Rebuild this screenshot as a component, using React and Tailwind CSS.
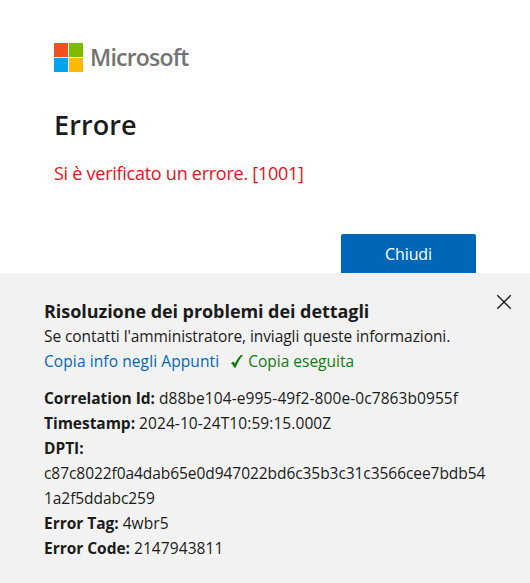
import React from 'react';
import clsx from 'clsx';

const DETAILS = [
  { label: 'Correlation Id:', value: 'd88be104-e995-49f2-800e-0c7863b0955f' },
  { label: 'Timestamp:', value: '2024-10-24T10:59:15.000Z' },
  {
    label: 'DPTI:',
    value: 'c87c8022f0a4dab65e0d947022bd6c35b3c31c3566cee7bdb541a2f5ddabc259',
    block: true,
  },
  { label: 'Error Tag:', value: '4wbr5' },
  { label: 'Error Code:', value: '2147943811' },
];

const MicrosoftLogo = () => (
  <div className="flex items-center">
    <svg className="h-[29px] w-[29px]" viewBox="0 0 29 29" aria-hidden="true">
      <path fill="#f25022" d="M0 0h14v14H0z" />
      <path fill="#7fba00" d="M15 0h14v14H15z" />
      <path fill="#00a4ef" d="M0 15h14v14H0z" />
      <path fill="#ffb900" d="M15 15h14v14H15z" />
    </svg>
    <span className="ml-[7px] text-[23px] leading-[29px] font-semibold tracking-[-0.8px] text-[#737373]">
      Microsoft
    </span>
  </div>
);

const CheckIcon = () => (
  <svg className="mr-[5px] h-[13px] w-[12px]" viewBox="0 0 12 13" aria-hidden="true">
    <path fill="#107c10" d="M0 8.2 2.2 6.400 4 8.500C5.600 5 7.600 2 9.800 0H12C9 3.500 6.600 7.800 4.800 12.500H3.200C2.300 10.600 1.300 9.300 0 8.200Z" />
  </svg>
);

const CloseIcon = () => (
  <svg className="h-4 w-4" viewBox="0 0 16 16" aria-hidden="true">
    <path fill="none" stroke="#1b1b1b" strokeWidth="1.4" d="M1.300 1.300l13.400 13.400M14.700 1.300L1.300 14.700" />
  </svg>
);

const DetailRow = ({ label, value, block }) => (
  <div className="break-all">
    <span className="font-bold tracking-[-0.03px]">{label}</span>{' '}
    <span className={clsx(block ? 'block tracking-[-0.06px]' : 'tracking-[0.08px]')}>{value}</span>
  </div>
);

const App = () => (
  <div className="flex h-[583px] w-[530px] flex-col overflow-hidden bg-white font-['Open_Sans',sans-serif] text-[#1b1b1b]">
    <main className="flex h-[273px] flex-col px-[54px] pt-[43px]">
      <MicrosoftLogo />
      <h1 className="mt-[33px] text-[27px] leading-[40px] font-semibold tracking-[0.1px]">Errore</h1>
      <p className="mt-3.5 text-[18px] leading-[28px] tracking-[-0.26px] text-[#e81123]">
        Si è verificato un errore. [1001]
      </p>
      <button
        type="button"
        className="mt-auto h-[39px] w-[135px] self-end rounded-t-xs bg-[#0067b8] text-[16px] tracking-[-0.1px] text-white"
      >
        Chiudi
      </button>
    </main>

    {/* Pannello con i dettagli per l'assistenza */}
    <section className="flex flex-1 flex-col bg-[#f2f2f2] pl-[44px] text-[15.5px] leading-[25px]">
      <div className="flex items-start justify-between pt-[21px] pr-[18px]">
        <h2 className="pt-[5px] text-[18px] leading-[25px] font-bold tracking-[-0.06px]">
          Risoluzione dei problemi dei dettagli
        </h2>
        <button type="button" aria-label="Chiudi dettagli">
          <CloseIcon />
        </button>
      </div>
      <p className="tracking-[-0.08px]">Se contatti l'amministratore, inviagli queste informazioni.</p>
      <div className="flex items-center">
        <a href="#" className="mr-3 tracking-[0.1px] text-[#0067b8]">Copia info negli Appunti</a>
        <CheckIcon />
        <span className="text-[#107c10]">Copia eseguita</span>
      </div>
      <div className="mt-3 w-[444px]">
        {DETAILS.map((detail) => (
          <DetailRow key={detail.label} {...detail} />
        ))}
      </div>
    </section>
  </div>
);

export default App;
